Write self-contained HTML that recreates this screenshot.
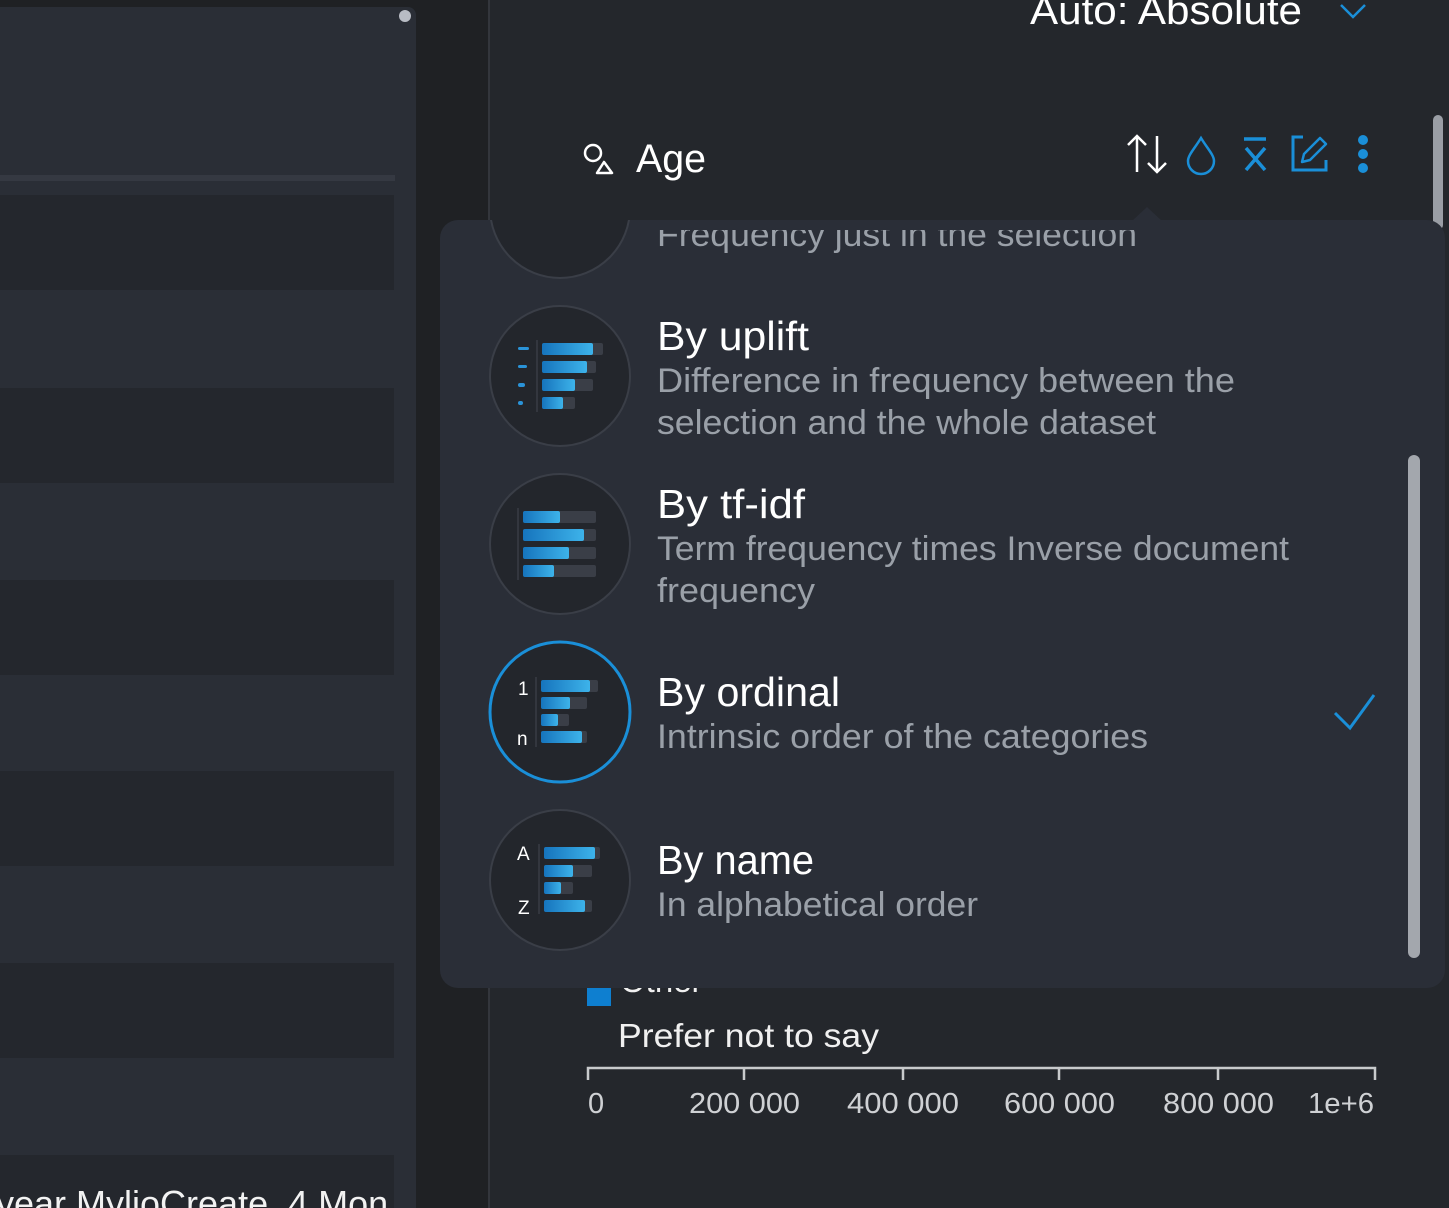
<!DOCTYPE html>
<html><head><meta charset="utf-8">
<style>
html,body{margin:0;padding:0;background:#1f2124;width:1449px;height:1208px;overflow:hidden}
svg{display:block}
text{font-family:"Liberation Sans",sans-serif}
</style></head>
<body>
<svg width="1449" height="1208" viewBox="0 0 1449 1208" xmlns="http://www.w3.org/2000/svg">
<defs>
<linearGradient id="g" x1="0" x2="1" y1="0" y2="0">
<stop offset="0" stop-color="#1674bd"/><stop offset="1" stop-color="#3db3ea"/>
</linearGradient>
<clipPath id="pop"><rect x="440" y="220" width="1005" height="768" rx="18"/></clipPath>
<clipPath id="fq"><rect x="640" y="230" width="600" height="30"/></clipPath>
<clipPath id="oth"><rect x="600" y="988" width="200" height="30"/></clipPath>
</defs>
<rect width="1449" height="1208" fill="#1f2124"/>
<rect x="-20" y="7" width="436" height="1230" rx="8" fill="#2a2e36"/>
<rect x="0" y="175" width="395" height="6" fill="#353942"/>
<g fill="#24272d">
<rect x="0" y="195" width="394" height="95"/>
<rect x="0" y="388" width="394" height="95"/>
<rect x="0" y="580" width="394" height="95"/>
<rect x="0" y="771" width="394" height="95"/>
<rect x="0" y="963" width="394" height="95"/>
<rect x="0" y="1155" width="394" height="60"/>
</g>
<circle cx="405" cy="16" r="6" fill="#b8bcc4"/>
<text x="-4" y="1216" font-size="36" fill="#f2f2f2">year MylioCreate_4 Mon</text>
<rect x="490" y="0" width="959" height="1208" fill="#24272c"/>
<rect x="488" y="0" width="2" height="1208" fill="#33363c"/>
<text x="1030" y="24" font-size="40" fill="#fff" textLength="272" lengthAdjust="spacingAndGlyphs">Auto: Absolute</text>
<path d="M1341 5 L1353 17 L1365 5" fill="none" stroke="#1a8fd8" stroke-width="2.5"/>
<circle cx="593" cy="153" r="8" fill="none" stroke="#fff" stroke-width="2.5"/>
<path d="M604 162 L612 173 L597 173 Z" fill="none" stroke="#fff" stroke-width="2.5" stroke-linejoin="round"/>
<text x="636" y="172" font-size="40" fill="#fff" textLength="70" lengthAdjust="spacingAndGlyphs">Age</text>
<path d="M1137 136 V172 M1128 145 L1137 136 L1146 145 M1157 136 V172 M1148 163 L1157 172 L1166 163" fill="none" stroke="#fff" stroke-width="2.5"/>
<path d="M1201 138 C1195 148 1188 155 1188 161 A13 13 0 0 0 1214 161 C1214 155 1207 148 1201 138 Z" fill="none" stroke="#1a8fd8" stroke-width="2.5"/>
<path d="M1244 139 H1266 M1246 148 L1265 170 M1265 148 L1246 170" fill="none" stroke="#1a8fd8" stroke-width="3.5"/>
<path d="M1303 137 H1293 V170 H1326 V160" fill="none" stroke="#1a8fd8" stroke-width="3"/>
<path d="M1302 162 L1304 154 L1320 138 L1326 144 L1310 160 Z" fill="none" stroke="#1a8fd8" stroke-width="2.5" stroke-linejoin="round"/>
<circle cx="1363" cy="140" r="5" fill="#1a8fd8"/><circle cx="1363" cy="154" r="5" fill="#1a8fd8"/><circle cx="1363" cy="168" r="5" fill="#1a8fd8"/>
<rect x="1433" y="115" width="10" height="115" rx="5" fill="#9a9ea5"/>
<rect x="587" y="985" width="24" height="21" fill="#0e7fd0"/>
<text x="620" y="992" font-size="33" fill="#f0f0f0" clip-path="url(#oth)">Other</text>
<text x="618" y="1047" font-size="33" fill="#f0f0f0" textLength="261" lengthAdjust="spacingAndGlyphs">Prefer not to say</text>
<path d="M588 1080 V1068 H1375 V1080 M744 1068 V1080 M903 1068 V1080 M1059 1068 V1080 M1218 1068 V1080" fill="none" stroke="#c8cacc" stroke-width="2.5"/>
<g font-size="29" fill="#cfd1d4">
<text x="588" y="1113">0</text>
<text x="689" y="1113" textLength="111" lengthAdjust="spacingAndGlyphs">200 000</text>
<text x="847" y="1113" textLength="112" lengthAdjust="spacingAndGlyphs">400 000</text>
<text x="1004" y="1113" textLength="111" lengthAdjust="spacingAndGlyphs">600 000</text>
<text x="1163" y="1113" textLength="111" lengthAdjust="spacingAndGlyphs">800 000</text>
<text x="1308" y="1113" textLength="66" lengthAdjust="spacingAndGlyphs">1e+6</text>
</g>
<path d="M1132 221 L1147 207 L1162 221 Z" fill="#2a2e37"/>
<rect x="440" y="220" width="1005" height="768" rx="18" fill="#2a2e37"/>
<g clip-path="url(#pop)">
<circle cx="560" cy="208" r="70" fill="#23262c" stroke="#3a3e47" stroke-width="2"/>
<text x="657" y="246" font-size="34" fill="#9aa0a8" textLength="480" lengthAdjust="spacingAndGlyphs" clip-path="url(#fq)">Frequency just in the selection</text>
<circle cx="560" cy="376" r="70" fill="#23262c" stroke="#3a3e47" stroke-width="2"/>
<g fill="#3a3e47"><rect x="542" y="343" width="61" height="12" rx="2"/><rect x="542" y="361" width="54" height="12" rx="2"/><rect x="542" y="379" width="51" height="12" rx="2"/><rect x="542" y="397" width="33" height="12" rx="2"/></g>
<g fill="url(#g)"><rect x="542" y="343" width="51" height="12" rx="2"/><rect x="542" y="361" width="45" height="12" rx="2"/><rect x="542" y="379" width="33" height="12" rx="2"/><rect x="542" y="397" width="21" height="12" rx="2"/></g>
<rect x="536" y="340" width="2" height="72" fill="#33363e"/>
<g fill="#2a93d8"><rect x="518" y="347" width="11" height="3" rx="1.5"/><rect x="518" y="365" width="9" height="3" rx="1.5"/><rect x="518" y="383" width="7" height="4" rx="2"/><rect x="518" y="401" width="5" height="4" rx="2"/></g>
<text x="657" y="350" font-size="41" fill="#fff" textLength="152" lengthAdjust="spacingAndGlyphs">By uplift</text>
<text x="657" y="392" font-size="34" fill="#9aa0a8" textLength="578" lengthAdjust="spacingAndGlyphs">Difference in frequency between the</text>
<text x="657" y="434" font-size="34" fill="#9aa0a8" textLength="499" lengthAdjust="spacingAndGlyphs">selection and the whole dataset</text>
<circle cx="560" cy="544" r="70" fill="#23262c" stroke="#3a3e47" stroke-width="2"/>
<g fill="#3a3e47"><rect x="523" y="511" width="73" height="12" rx="2"/><rect x="523" y="529" width="73" height="12" rx="2"/><rect x="523" y="547" width="73" height="12" rx="2"/><rect x="523" y="565" width="73" height="12" rx="2"/></g>
<g fill="url(#g)"><rect x="523" y="511" width="37" height="12" rx="2"/><rect x="523" y="529" width="61" height="12" rx="2"/><rect x="523" y="547" width="46" height="12" rx="2"/><rect x="523" y="565" width="31" height="12" rx="2"/></g>
<rect x="517" y="508" width="2" height="72" fill="#33363e"/>
<text x="657" y="518" font-size="41" fill="#fff" textLength="148" lengthAdjust="spacingAndGlyphs">By tf-idf</text>
<text x="657" y="560" font-size="34" fill="#9aa0a8" textLength="632" lengthAdjust="spacingAndGlyphs">Term frequency times Inverse document</text>
<text x="657" y="602" font-size="34" fill="#9aa0a8" textLength="158" lengthAdjust="spacingAndGlyphs">frequency</text>
<circle cx="560" cy="712" r="70" fill="#23262c" stroke="#1a8fd8" stroke-width="3"/>
<g fill="#3a3e47"><rect x="541" y="680" width="57" height="12" rx="2"/><rect x="541" y="697" width="46" height="12" rx="2"/><rect x="541" y="714" width="28" height="12" rx="2"/><rect x="541" y="731" width="46" height="12" rx="2"/></g>
<g fill="url(#g)"><rect x="541" y="680" width="49" height="12" rx="2"/><rect x="541" y="697" width="29" height="12" rx="2"/><rect x="541" y="714" width="17" height="12" rx="2"/><rect x="541" y="731" width="41" height="12" rx="2"/></g>
<rect x="535" y="677" width="2" height="70" fill="#33363e"/>
<text x="518" y="695" font-size="19" fill="#fff">1</text>
<text x="517" y="745" font-size="19" fill="#fff">n</text>
<text x="657" y="706" font-size="41" fill="#fff" textLength="183" lengthAdjust="spacingAndGlyphs">By ordinal</text>
<text x="657" y="748" font-size="34" fill="#9aa0a8" textLength="491" lengthAdjust="spacingAndGlyphs">Intrinsic order of the categories</text>
<path d="M1335 713 L1350 728 L1374 695" fill="none" stroke="#1a8fd8" stroke-width="3"/>
<circle cx="560" cy="880" r="70" fill="#23262c" stroke="#3a3e47" stroke-width="2"/>
<g fill="#3a3e47"><rect x="544" y="847" width="56" height="12" rx="2"/><rect x="544" y="865" width="48" height="12" rx="2"/><rect x="544" y="882" width="29" height="12" rx="2"/><rect x="544" y="900" width="48" height="12" rx="2"/></g>
<g fill="url(#g)"><rect x="544" y="847" width="51" height="12" rx="2"/><rect x="544" y="865" width="29" height="12" rx="2"/><rect x="544" y="882" width="17" height="12" rx="2"/><rect x="544" y="900" width="41" height="12" rx="2"/></g>
<rect x="538" y="844" width="2" height="70" fill="#33363e"/>
<text x="517" y="860" font-size="19" fill="#fff">A</text>
<text x="518" y="914" font-size="19" fill="#fff">Z</text>
<text x="657" y="874" font-size="41" fill="#fff" textLength="157" lengthAdjust="spacingAndGlyphs">By name</text>
<text x="657" y="916" font-size="34" fill="#9aa0a8" textLength="321" lengthAdjust="spacingAndGlyphs">In alphabetical order</text>
<rect x="1408" y="455" width="12" height="503" rx="6" fill="#a3a7ad"/>
</g>
</svg>
</body></html>
